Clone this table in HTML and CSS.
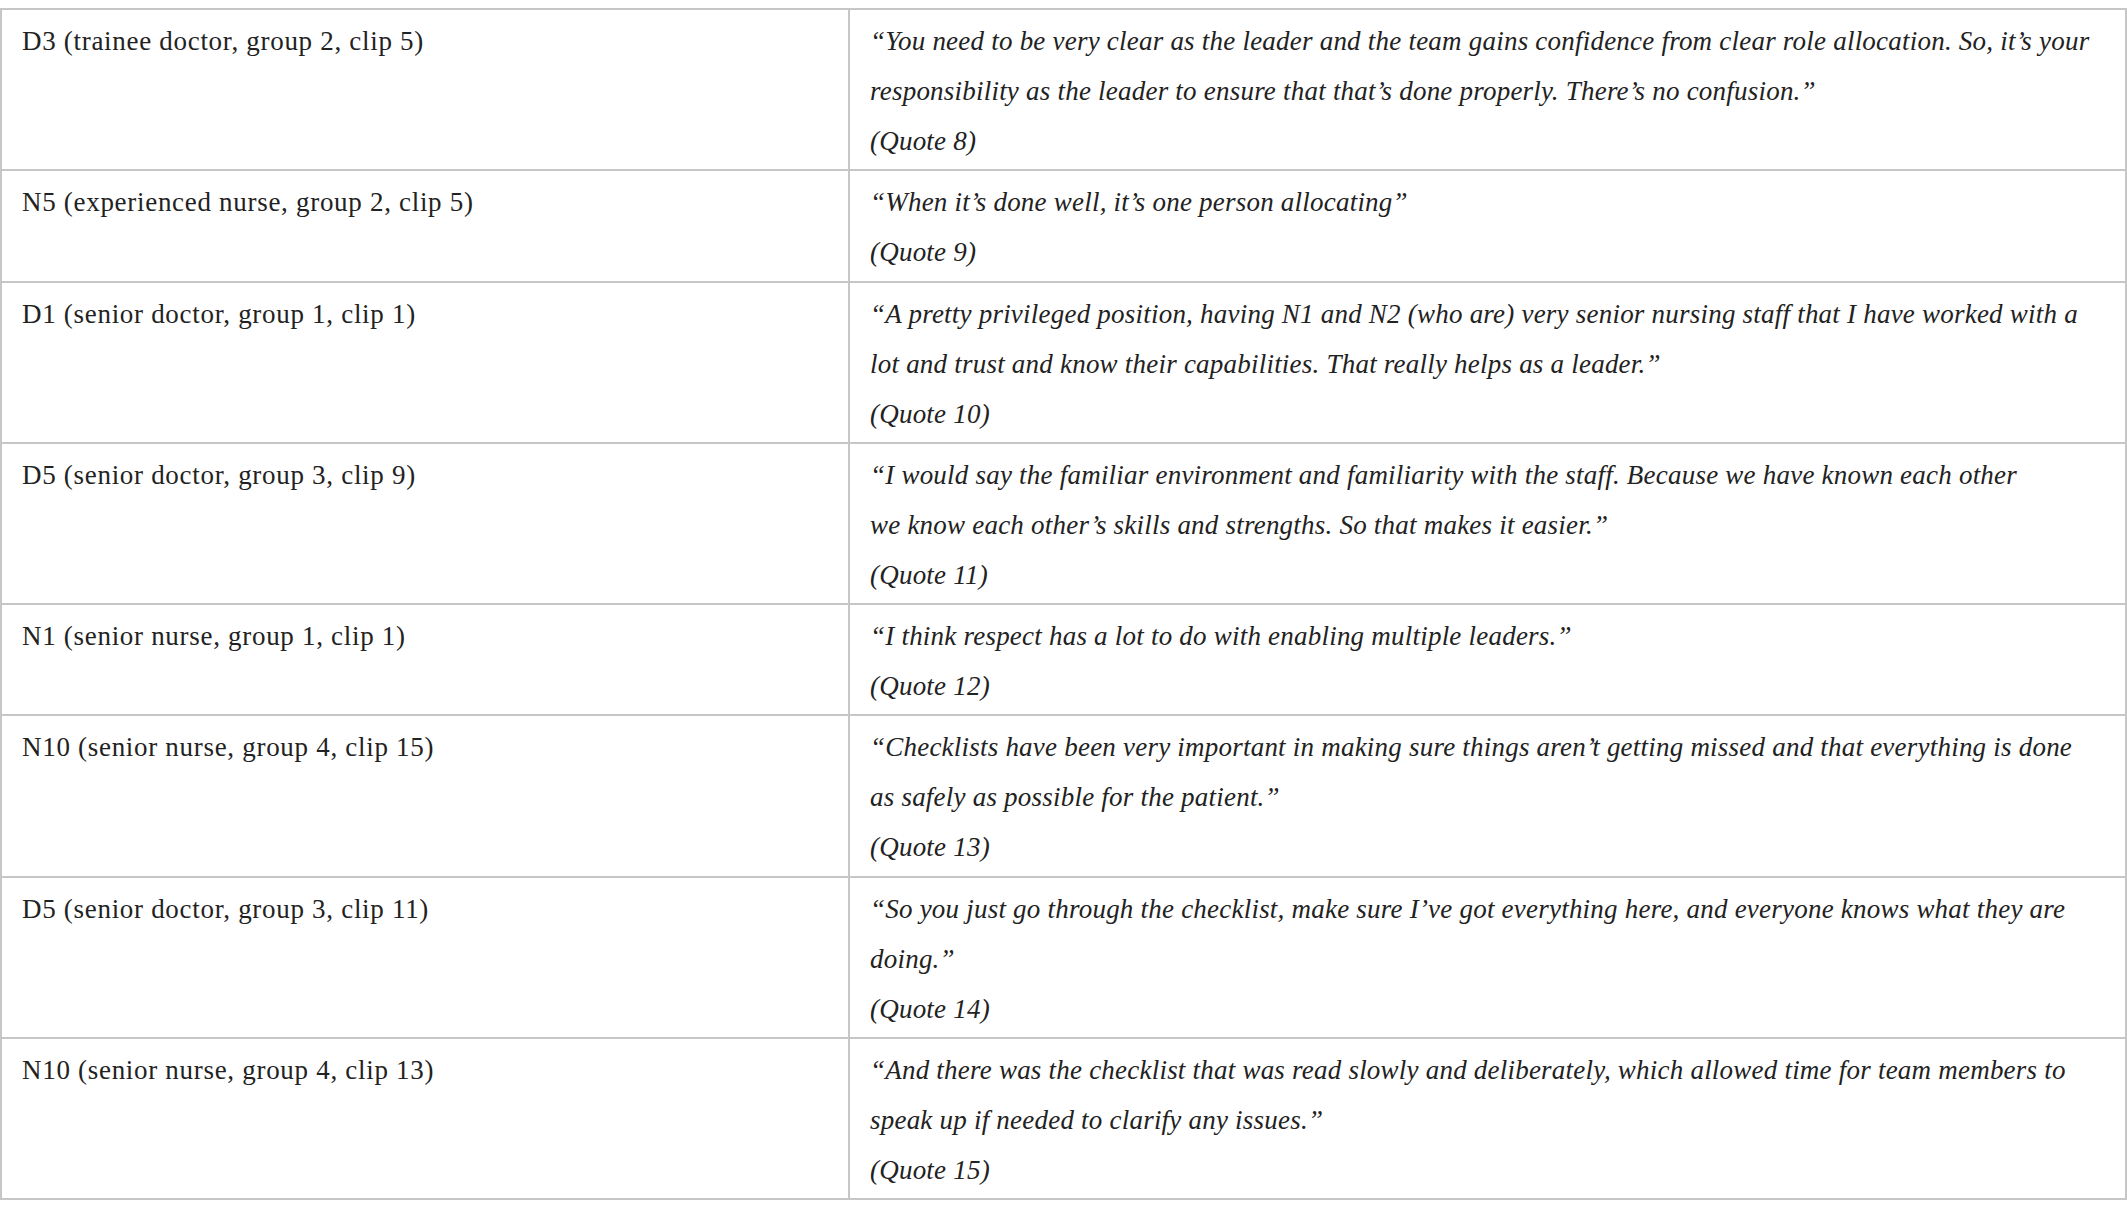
FILE: index.html
```html
<!DOCTYPE html>
<html lang="en">
<head>
<meta charset="utf-8">
<title>Quotes table</title>
<link rel="stylesheet" href="styles.css">
</head>
<body>
<table class="quotes">
  <colgroup>
    <col class="col-source">
    <col class="col-quote">
  </colgroup>
  <tbody>
    <tr>
      <td class="source">D3 (trainee doctor, group 2, clip 5)</td>
      <td class="quote">“You need to be very clear as the leader and the team gains confidence from clear role allocation. So, it’s your responsibility as the leader to ensure that that’s done properly. There’s no confusion.”<br>(Quote 8)</td>
    </tr>
    <tr>
      <td class="source">N5 (experienced nurse, group 2, clip 5)</td>
      <td class="quote">“When it’s done well, it’s one person allocating”<br>(Quote 9)</td>
    </tr>
    <tr>
      <td class="source">D1 (senior doctor, group 1, clip 1)</td>
      <td class="quote">“A pretty privileged position, having N1 and N2 (who are) very senior nursing staff that I have worked with a lot and trust and know their capabilities. That really helps as a leader.”<br>(Quote 10)</td>
    </tr>
    <tr>
      <td class="source">D5 (senior doctor, group 3, clip 9)</td>
      <td class="quote">“I would say the familiar environment and familiarity with the staff. Because we have known each other<br>we know each other’s skills and strengths. So that makes it easier.”<br>(Quote 11)</td>
    </tr>
    <tr>
      <td class="source">N1 (senior nurse, group 1, clip 1)</td>
      <td class="quote">“I think respect has a lot to do with enabling multiple leaders.”<br>(Quote 12)</td>
    </tr>
    <tr>
      <td class="source">N10 (senior nurse, group 4, clip 15)</td>
      <td class="quote">“Checklists have been very important in making sure things aren’t getting missed and that everything is done as safely as possible for the patient.”<br>(Quote 13)</td>
    </tr>
    <tr>
      <td class="source">D5 (senior doctor, group 3, clip 11)</td>
      <td class="quote">“So you just go through the checklist, make sure I’ve got everything here, and everyone knows what they are doing.”<br>(Quote 14)</td>
    </tr>
    <tr>
      <td class="source">N10 (senior nurse, group 4, clip 13)</td>
      <td class="quote">“And there was the checklist that was read slowly and deliberately, which allowed time for team members to speak up if needed to clarify any issues.”<br>(Quote 15)</td>
    </tr>
  </tbody>
</table>
</body>
</html>
```
FILE: styles.css
```css
html, body {
  margin: 0;
  padding: 0;
  background: #ffffff;
}

body {
  padding-top: 8px;
  font-family: "Liberation Serif", "Times New Roman", serif;
  color: #222222;
}

.quotes {
  width: 100%;
  border-collapse: collapse;
  table-layout: fixed;
}

.col-source {
  width: 848px;
}

.quotes td {
  border: 2px solid #c6c6c6;
  vertical-align: top;
  font-size: 27px;
  line-height: 50px;
  padding: 6px 24px 3.25px 20px;
}

.quotes td.source {
  letter-spacing: 0.7px;
}

.quotes td.quote {
  font-style: italic;
  letter-spacing: 0.22px;
}
```
